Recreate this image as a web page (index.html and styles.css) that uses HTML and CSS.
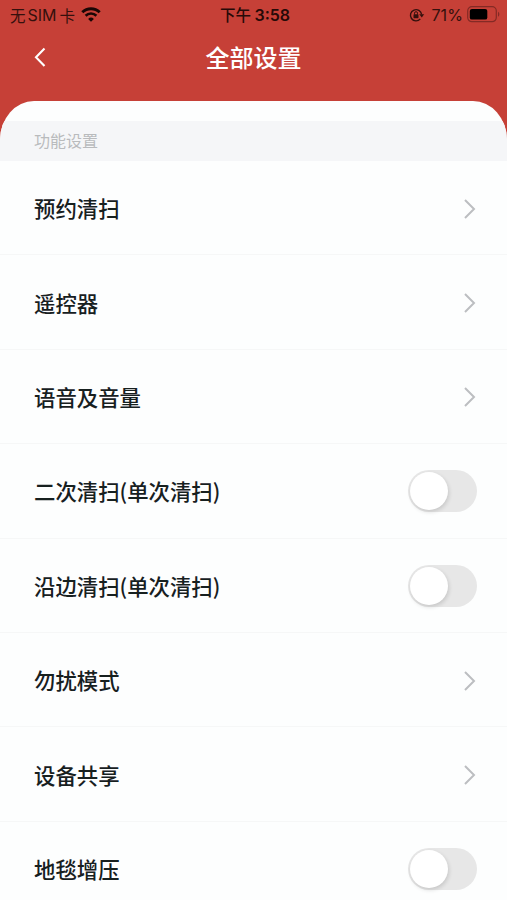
FILE: index.html
```html
<!DOCTYPE html>
<html lang="zh-CN">
<head>
    <meta charset="UTF-8">
    <meta name="viewport" content="width=device-width, initial-scale=1.0">
    <title>全部设置</title>
    <link rel="stylesheet" href="styles.css">
</head>
<body>
    <div class="status-bar">
        <div class="carrier">
            <span>无</span><span class="sim">SIM</span><span>卡</span>
            <svg class="wifi" width="20" height="15" viewBox="0 0 20 15">
                <path d="M1.3 5.2a12.5 12.5 0 0 1 17.4 0" fill="none" stroke="#1a0605" stroke-width="2.9"/>
                <path d="M4.6 8.7a7.8 7.8 0 0 1 10.8 0" fill="none" stroke="#1a0605" stroke-width="2.6"/>
                <path d="M10 14.8L7.1 11.9a4.1 4.1 0 0 1 5.8 0z" fill="#1a0605"/>
            </svg>
        </div>
        <div class="time">下午 <b>3:58</b></div>
        <div class="battery-info">
            <svg class="lock" width="16" height="14" viewBox="0 0 16 14">
                <path d="M11.3 10.9A5.6 5.6 0 1 1 12.6 6.5" fill="none" stroke="#35100d" stroke-width="1.4"/>
                <path d="M10.2 6.2h5l-2.4 3.4z" fill="#35100d"/>
                <rect x="4.5" y="6.3" width="5" height="3.9" rx="0.6" fill="#35100d"/>
                <path d="M5.5 6.5V5.2a1.5 1.5 0 0 1 3 0v1.3" fill="none" stroke="#35100d" stroke-width="1"/>
            </svg>
            <span class="percent">71%</span>
            <svg class="battery" width="33" height="17" viewBox="0 0 33 17">
                <rect x="0.7" y="0.7" width="28.6" height="15" rx="4.2" fill="none" stroke="#842a25" stroke-width="1.2"/>
                <rect x="2.8" y="2.9" width="17.5" height="10.7" rx="2.2" fill="#000"/>
                <path d="M31 5.8c1.8.8 1.8 4.2 0 5z" fill="#842a25"/>
            </svg>
        </div>
    </div>

    <div class="header">
        <svg class="back" width="14" height="22" viewBox="0 0 14 22">
            <path d="M11.5 2.5L3 11.2L11.5 19.9" fill="none" stroke="#fff" stroke-width="2.1"/>
        </svg>
        <h1>全部设置</h1>
    </div>

    <div class="panel">
        <div class="section-title">功能设置</div>
        <ul class="settings">
            <li class="item">
                <span>预约清扫</span>
                <svg class="arrow" width="14" height="22" viewBox="0 0 14 22"><path d="M2 2l9 9l-9 9"/></svg>
            </li>
            <li class="item">
                <span>遥控器</span>
                <svg class="arrow" width="14" height="22" viewBox="0 0 14 22"><path d="M2 2l9 9l-9 9"/></svg>
            </li>
            <li class="item">
                <span>语音及音量</span>
                <svg class="arrow" width="14" height="22" viewBox="0 0 14 22"><path d="M2 2l9 9l-9 9"/></svg>
            </li>
            <li class="item">
                <span>二次清扫(单次清扫)</span>
                <div class="switch"><div class="knob"></div></div>
            </li>
            <li class="item">
                <span>沿边清扫(单次清扫)</span>
                <div class="switch"><div class="knob"></div></div>
            </li>
            <li class="item">
                <span>勿扰模式</span>
                <svg class="arrow" width="14" height="22" viewBox="0 0 14 22"><path d="M2 2l9 9l-9 9"/></svg>
            </li>
            <li class="item">
                <span>设备共享</span>
                <svg class="arrow" width="14" height="22" viewBox="0 0 14 22"><path d="M2 2l9 9l-9 9"/></svg>
            </li>
            <li class="item">
                <span>地毯增压</span>
                <div class="switch"><div class="knob"></div></div>
            </li>
        </ul>
    </div>
</body>
</html>
```

FILE: styles.css
```css
* {
    box-sizing: border-box;
}

body {
    margin: 0;
    height: 900px;
    overflow: hidden;
    display: flex;
    flex-direction: column;
    background-color: #c64037;
    font-family: "Noto Sans CJK SC", sans-serif;
}

.status-bar {
    height: 28px;
    flex-shrink: 0;
    padding: 0 7px 0 10px;
    display: grid;
    grid-template-columns: 1fr auto 1fr;
    align-items: center;
    font-size: 15.5px;
    line-height: 28px;
    color: #35100d;
}

.carrier {
    display: flex;
    align-items: center;
}

.sim {
    margin: 0 3px 0 2px;
    font-family: Inter, sans-serif;
    font-size: 16px;
}

.wifi {
    margin: 0 0 0 6px;
}

.time {
    font-weight: 500;
    color: #260a08;
}

.time b {
    font-family: Inter, sans-serif;
    font-size: 16px;
    font-weight: 600;
}

.battery-info {
    display: flex;
    align-items: center;
    justify-content: flex-end;
}

.lock {
    margin-top: 1px;
}

.percent {
    margin: 0 4px 0 6px;
    font-family: Inter, sans-serif;
    font-size: 16px;
    letter-spacing: 0.1px;
}

.header {
    height: 73px;
    flex-shrink: 0;
    padding: 0 33px 16px;
    display: grid;
    grid-template-columns: 1fr auto 1fr;
    align-items: center;
}

.header h1 {
    margin: 0;
    font-size: 24px;
    font-weight: 500;
    line-height: 36px;
    color: #fff;
}

.panel {
    flex: 1;
    min-height: 0;
    padding-top: 20px;
    overflow: hidden;
    border-radius: 34px 34px 0 0 / 39px 39px 0 0;
    background-color: #fdfefe;
}

.section-title {
    height: 40px;
    padding-left: 34px;
    font-size: 16px;
    line-height: 38px;
    color: #b9bbbd;
    background-color: #f5f6f8;
}

.settings {
    margin: 0;
    padding: 0;
    list-style: none;
}

.item {
    height: 94.4px;
    padding: 0 30px 0 34px;
    display: flex;
    align-items: center;
    justify-content: space-between;
    border-bottom: 1px solid #f6f7f7;
    font-size: 21.4px;
    font-weight: 500;
    color: #17201f;
}

.arrow {
    margin-top: 2px;
    fill: none;
    stroke: #bcbec1;
    stroke-width: 2;
}

.switch {
    width: 69px;
    height: 42px;
    margin-top: 1px;
    padding: 2px;
    border-radius: 21px;
    background-color: #e7e7e7;
}

.knob {
    width: 38px;
    height: 38px;
    border-radius: 50%;
    background-color: #fff;
    box-shadow: 1px 2px 4px rgba(0, 0, 0, 0.14);
}
```
